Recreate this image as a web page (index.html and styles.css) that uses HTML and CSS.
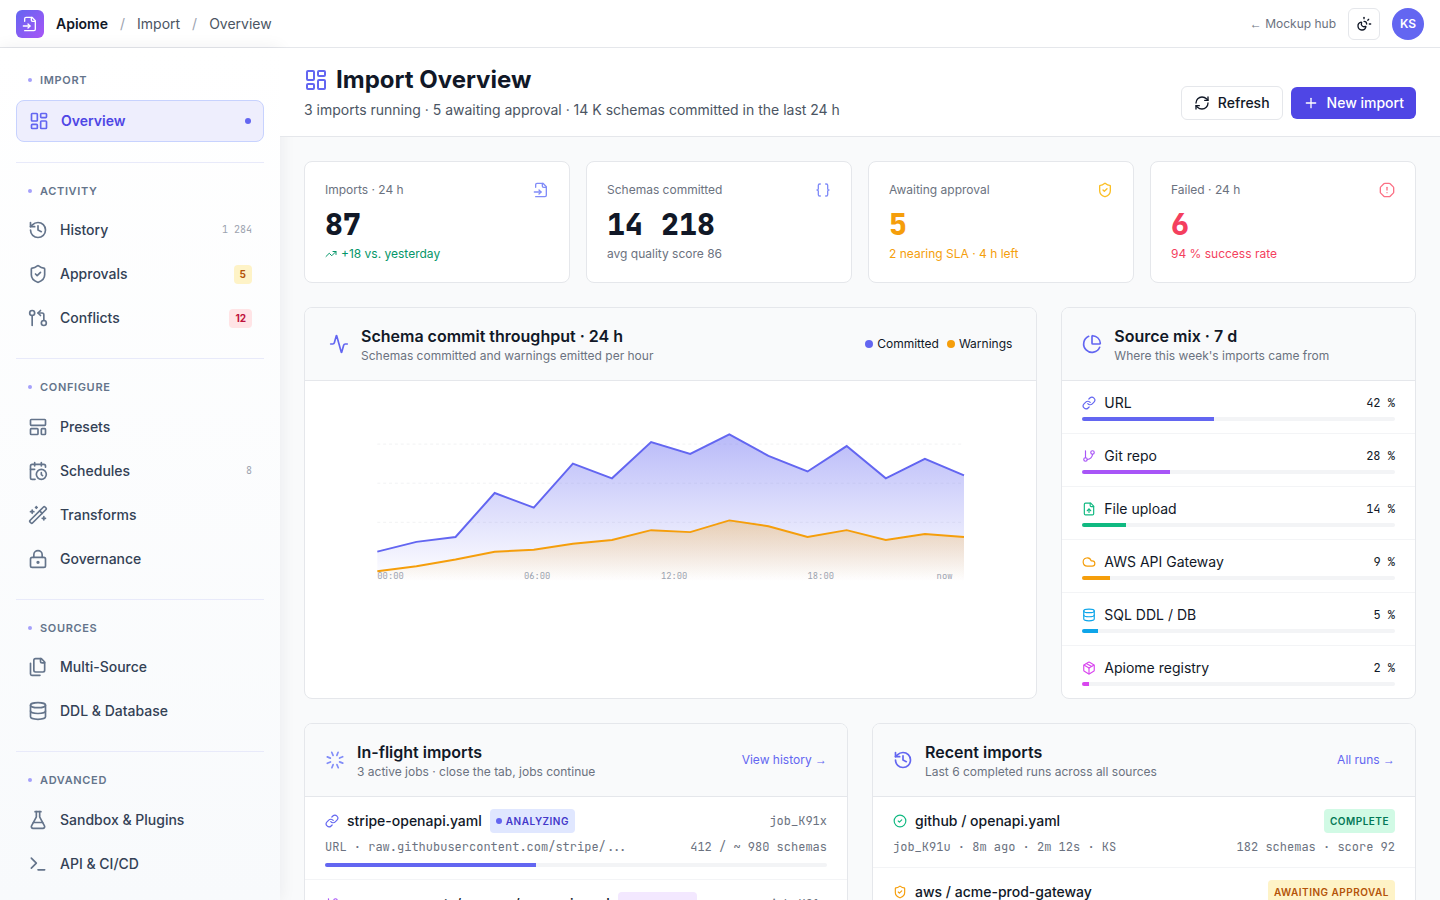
FILE: index.html
```html
<!DOCTYPE html>
<html lang="en">
<head>
    <meta charset="UTF-8">
    <meta name="viewport" content="width=device-width, initial-scale=1.0">
    <title>Import Overview - Apiome</title>
    <link rel="stylesheet" href="styles.css">
</head>
<body>

<!-- Icon sprite -->
<svg class="sprite" aria-hidden="true">
    <symbol id="i-file-input" viewBox="0 0 24 24"><path d="M4 22h14a2 2 0 0 0 2-2V7l-5-5H6a2 2 0 0 0-2 2v4"/><path d="M14 2v4a2 2 0 0 0 2 2h4"/><path d="M2 15h10"/><path d="m9 18 3-3-3-3"/></symbol>
    <symbol id="i-dashboard" viewBox="0 0 24 24"><rect x="3" y="3" width="7" height="9" rx="1"/><rect x="14" y="3" width="7" height="5" rx="1"/><rect x="14" y="12" width="7" height="9" rx="1"/><rect x="3" y="16" width="7" height="5" rx="1"/></symbol>
    <symbol id="i-history" viewBox="0 0 24 24"><path d="M3 12a9 9 0 1 0 9-9 9.75 9.75 0 0 0-6.74 2.74L3 8"/><path d="M3 3v5h5"/><path d="M12 7v5l4 2"/></symbol>
    <symbol id="i-shield" viewBox="0 0 24 24"><path d="M20 13c0 5-3.5 7.5-7.66 8.95a1 1 0 0 1-.67-.01C7.5 20.5 4 18 4 13V6a1 1 0 0 1 1-1c2 0 4.5-1.2 6.24-2.72a1.17 1.17 0 0 1 1.52 0C14.51 3.81 17 5 19 5a1 1 0 0 1 1 1z"/><path d="m9 12 2 2 4-4"/></symbol>
    <symbol id="i-pull" viewBox="0 0 24 24"><circle cx="5" cy="6" r="3"/><path d="M5 9v12"/><circle cx="19" cy="18" r="3"/><path d="m15 9-3-3 3-3"/><path d="M12 6h5a2 2 0 0 1 2 2v7"/></symbol>
    <symbol id="i-template" viewBox="0 0 24 24"><rect x="3" y="3" width="18" height="7" rx="1"/><rect x="3" y="14" width="9" height="7" rx="1"/><rect x="16" y="14" width="5" height="7" rx="1"/></symbol>
    <symbol id="i-calendar" viewBox="0 0 24 24"><path d="M21 7.5V6a2 2 0 0 0-2-2H5a2 2 0 0 0-2 2v14a2 2 0 0 0 2 2h3.5"/><path d="M16 2v4"/><path d="M8 2v4"/><path d="M3 10h5"/><path d="M17.5 17.5 16 16.3V14"/><circle cx="16" cy="16" r="6"/></symbol>
    <symbol id="i-wand" viewBox="0 0 24 24"><path d="m21.64 3.64-1.28-1.28a1.21 1.21 0 0 0-1.72 0L2.36 18.64a1.21 1.21 0 0 0 0 1.72l1.28 1.28a1.2 1.2 0 0 0 1.72 0L21.64 5.36a1.2 1.2 0 0 0 0-1.72"/><path d="m14 7 3 3"/><path d="M5 6v4"/><path d="M19 14v4"/><path d="M10 2v2"/><path d="M7 8H3"/><path d="M21 16h-4"/><path d="M11 3H9"/></symbol>
    <symbol id="i-lock" viewBox="0 0 24 24"><circle cx="12" cy="16" r="1"/><rect x="3" y="10" width="18" height="12" rx="2"/><path d="M7 10V7a5 5 0 0 1 10 0v3"/></symbol>
    <symbol id="i-files" viewBox="0 0 24 24"><path d="M20 7h-3a2 2 0 0 1-2-2V2"/><path d="M9 18a2 2 0 0 1-2-2V4a2 2 0 0 1 2-2h7l4 4v10a2 2 0 0 1-2 2Z"/><path d="M3 7.6v12.8A1.6 1.6 0 0 0 4.6 22h9.8"/></symbol>
    <symbol id="i-database" viewBox="0 0 24 24"><ellipse cx="12" cy="5" rx="9" ry="3"/><path d="M3 5v14a9 3 0 0 0 18 0V5"/><path d="M3 12a9 3 0 0 0 18 0"/></symbol>
    <symbol id="i-flask" viewBox="0 0 24 24"><path d="M14 2v6a2 2 0 0 0 .245.96l5.51 10.08A2 2 0 0 1 18 22H6a2 2 0 0 1-1.755-2.96l5.51-10.08A2 2 0 0 0 10 8V2"/><path d="M6.453 15h11.094"/><path d="M8.5 2h7"/></symbol>
    <symbol id="i-terminal" viewBox="0 0 24 24"><path d="m4 17 6-6-6-6"/><path d="M12 19h8"/></symbol>
    <symbol id="i-sun-moon" viewBox="0 0 24 24"><path d="M12 2v2"/><path d="M14.837 16.385a6 6 0 1 1-7.223-7.222c.624-.147.97.66.715 1.248a4 4 0 0 0 5.26 5.259c.589-.255 1.396.09 1.248.715"/><path d="M16 12a4 4 0 0 0-4-4"/><path d="m19 5-1.256 1.256"/><path d="M20 12h2"/></symbol>
    <symbol id="i-refresh" viewBox="0 0 24 24"><path d="M3 12a9 9 0 0 1 9-9 9.75 9.75 0 0 1 6.74 2.74L21 8"/><path d="M21 3v5h-5"/><path d="M21 12a9 9 0 0 1-9 9 9.75 9.75 0 0 1-6.74-2.74L3 16"/><path d="M8 16H3v5"/></symbol>
    <symbol id="i-plus" viewBox="0 0 24 24"><path d="M5 12h14"/><path d="M12 5v14"/></symbol>
    <symbol id="i-braces" viewBox="0 0 24 24"><path d="M8 3H7a2 2 0 0 0-2 2v5a2 2 0 0 1-2 2 2 2 0 0 1 2 2v5c0 1.1.9 2 2 2h1"/><path d="M16 21h1a2 2 0 0 0 2-2v-5c0-1.1.9-2 2-2a2 2 0 0 1-2-2V5a2 2 0 0 0-2-2h-1"/></symbol>
    <symbol id="i-alert" viewBox="0 0 24 24"><path d="M12 16h.01"/><path d="M12 8v4"/><path d="M15.312 2a2 2 0 0 1 1.414.586l4.688 4.688A2 2 0 0 1 22 8.688v6.624a2 2 0 0 1-.586 1.414l-4.688 4.688a2 2 0 0 1-1.414.586H8.688a2 2 0 0 1-1.414-.586l-4.688-4.688A2 2 0 0 1 2 15.312V8.688a2 2 0 0 1 .586-1.414l4.688-4.688A2 2 0 0 1 8.688 2z"/></symbol>
    <symbol id="i-trend" viewBox="0 0 24 24"><path d="M16 7h6v6"/><path d="m22 7-8.5 8.5-5-5L2 17"/></symbol>
    <symbol id="i-activity" viewBox="0 0 24 24"><path d="M22 12h-2.48a2 2 0 0 0-1.93 1.46l-2.35 8.36a.25.25 0 0 1-.48 0L9.24 2.18a.25.25 0 0 0-.48 0l-2.35 8.36A2 2 0 0 1 4.49 12H2"/></symbol>
    <symbol id="i-pie" viewBox="0 0 24 24"><path d="M21 12c.552 0 1.005-.449.95-.998a10 10 0 0 0-8.953-8.951c-.55-.055-.998.398-.998.95v8a1 1 0 0 0 1 1z"/><path d="M21.21 15.89A10 10 0 1 1 8 2.83"/></symbol>
    <symbol id="i-link" viewBox="0 0 24 24"><path d="M10 13a5 5 0 0 0 7.54.54l3-3a5 5 0 0 0-7.07-7.07l-1.72 1.71"/><path d="M14 11a5 5 0 0 0-7.54-.54l-3 3a5 5 0 0 0 7.07 7.07l1.71-1.71"/></symbol>
    <symbol id="i-branch" viewBox="0 0 24 24"><path d="M6 3v12"/><circle cx="18" cy="6" r="3"/><circle cx="6" cy="18" r="3"/><path d="M18 9a9 9 0 0 1-9 9"/></symbol>
    <symbol id="i-file-up" viewBox="0 0 24 24"><path d="M15 2H6a2 2 0 0 0-2 2v16a2 2 0 0 0 2 2h12a2 2 0 0 0 2-2V7Z"/><path d="M14 2v4a2 2 0 0 0 2 2h4"/><path d="M12 12v6"/><path d="m15 15-3-3-3 3"/></symbol>
    <symbol id="i-cloud" viewBox="0 0 24 24"><path d="M17.5 19H9a7 7 0 1 1 6.71-9h1.79a4.5 4.5 0 1 1 0 9Z"/></symbol>
    <symbol id="i-package" viewBox="0 0 24 24"><path d="M11 21.73a2 2 0 0 0 2 0l7-4A2 2 0 0 0 21 16V8a2 2 0 0 0-1-1.73l-7-4a2 2 0 0 0-2 0l-7 4A2 2 0 0 0 3 8v8a2 2 0 0 0 1 1.73z"/><path d="M12 22V12"/><path d="M3.29 7 12 12l8.71-5"/><path d="m7.5 4.27 9 5.15"/></symbol>
    <symbol id="i-loader" viewBox="0 0 24 24"><g transform="rotate(22 12 12)"><path d="M12 2v4"/><path d="m16.2 7.8 2.9-2.9"/><path d="M18 12h4"/><path d="m16.2 16.2 2.9 2.9"/><path d="M12 18v4"/><path d="m4.9 19.1 2.9-2.9"/><path d="M2 12h4"/><path d="m4.9 4.9 2.9 2.9"/></g></symbol>
    <symbol id="i-check" viewBox="0 0 24 24"><circle cx="12" cy="12" r="10"/><path d="m9 12 2 2 4-4"/></symbol>
</svg>

<header class="topbar">
    <span class="logo"><svg class="icon icon-16"><use href="#i-file-input"/></svg></span>
    <nav class="breadcrumb">
        <a href="#" class="brand">Apiome</a>
        <span class="slash">/</span>
        <a href="#">Import</a>
        <span class="slash">/</span>
        <a href="#">Overview</a>
    </nav>
    <a href="#" class="hub-link"><span class="arrow">←</span> Mockup hub</a>
    <button type="button" class="theme-btn" aria-label="Toggle theme"><svg class="icon icon-16"><use href="#i-sun-moon"/></svg></button>
    <span class="avatar">KS</span>
</header>

<div class="layout">
    <nav class="sidebar">
        <section class="nav-section">
            <h2 class="nav-title">Import</h2>
            <a href="#" class="nav-item active"><svg class="icon icon-20"><use href="#i-dashboard"/></svg>Overview<span class="active-dot"></span></a>
        </section>
        <section class="nav-section">
            <h2 class="nav-title">Activity</h2>
            <a href="#" class="nav-item"><svg class="icon icon-20"><use href="#i-history"/></svg>History<span class="count">1 284</span></a>
            <a href="#" class="nav-item"><svg class="icon icon-20"><use href="#i-shield"/></svg>Approvals<span class="pill pill-amber">5</span></a>
            <a href="#" class="nav-item"><svg class="icon icon-20"><use href="#i-pull"/></svg>Conflicts<span class="pill pill-rose">12</span></a>
        </section>
        <section class="nav-section">
            <h2 class="nav-title">Configure</h2>
            <a href="#" class="nav-item"><svg class="icon icon-20"><use href="#i-template"/></svg>Presets</a>
            <a href="#" class="nav-item"><svg class="icon icon-20"><use href="#i-calendar"/></svg>Schedules<span class="count">8</span></a>
            <a href="#" class="nav-item"><svg class="icon icon-20"><use href="#i-wand"/></svg>Transforms</a>
            <a href="#" class="nav-item"><svg class="icon icon-20"><use href="#i-lock"/></svg>Governance</a>
        </section>
        <section class="nav-section">
            <h2 class="nav-title">Sources</h2>
            <a href="#" class="nav-item"><svg class="icon icon-20"><use href="#i-files"/></svg>Multi-Source</a>
            <a href="#" class="nav-item"><svg class="icon icon-20"><use href="#i-database"/></svg>DDL &amp; Database</a>
        </section>
        <section class="nav-section">
            <h2 class="nav-title">Advanced</h2>
            <a href="#" class="nav-item"><svg class="icon icon-20"><use href="#i-flask"/></svg>Sandbox &amp; Plugins</a>
            <a href="#" class="nav-item"><svg class="icon icon-20"><use href="#i-terminal"/></svg>API &amp; CI/CD</a>
        </section>
    </nav>

    <main class="main">
        <div class="page-header">
            <div>
                <h1><svg class="icon icon-24 indigo"><use href="#i-dashboard"/></svg>Import Overview</h1>
                <p>3 imports running · 5 awaiting approval · 14 K schemas committed in the last 24 h</p>
            </div>
            <div class="actions">
                <button type="button" class="btn btn-outline"><svg class="icon icon-16"><use href="#i-refresh"/></svg>Refresh</button>
                <button type="button" class="btn btn-primary"><svg class="icon icon-16"><use href="#i-plus"/></svg>New import</button>
            </div>
        </div>

        <div class="content">
            <!-- Stat cards -->
            <div class="stats">
                <div class="card stat">
                    <div class="stat-label">Imports · 24 h<svg class="icon icon-16 indigo-light"><use href="#i-file-input"/></svg></div>
                    <div class="stat-value">87</div>
                    <div class="stat-note green-text"><svg class="icon icon-12"><use href="#i-trend"/></svg>+18 vs. yesterday</div>
                </div>
                <div class="card stat">
                    <div class="stat-label">Schemas committed<svg class="icon icon-16 indigo-light"><use href="#i-braces"/></svg></div>
                    <div class="stat-value">14 218</div>
                    <div class="stat-note muted">avg quality score 86</div>
                </div>
                <div class="card stat">
                    <div class="stat-label">Awaiting approval<svg class="icon icon-16 amber-light"><use href="#i-shield"/></svg></div>
                    <div class="stat-value amber">5</div>
                    <div class="stat-note amber">2 nearing SLA · 4 h left</div>
                </div>
                <div class="card stat">
                    <div class="stat-label">Failed · 24 h<svg class="icon icon-16 rose-light"><use href="#i-alert"/></svg></div>
                    <div class="stat-value rose">6</div>
                    <div class="stat-note rose">94 % success rate</div>
                </div>
            </div>

            <div class="overview-grid">
                <section class="card panel wide">
                    <div class="panel-header roomy">
                        <svg class="icon icon-20 indigo"><use href="#i-activity"/></svg>
                        <div class="panel-heading">
                            <h2>Schema commit throughput · 24 h</h2>
                            <p>Schemas committed and warnings emitted per hour</p>
                        </div>
                        <div class="legend">
                            <span class="legend-item"><span class="dot bg-indigo"></span>Committed</span>
                            <span class="legend-item"><span class="dot bg-amber"></span>Warnings</span>
                        </div>
                    </div>
                    <div class="chart-body">
                        <svg class="chart" viewBox="0 0 600 180">
                            <defs>
                                <linearGradient id="g-committed" x1="0" y1="0" x2="0" y2="1">
                                    <stop offset="0" stop-color="#6366f1" stop-opacity="0.45"/>
                                    <stop offset="1" stop-color="#6366f1" stop-opacity="0"/>
                                </linearGradient>
                                <linearGradient id="g-warnings" x1="0" y1="0" x2="0" y2="1">
                                    <stop offset="0" stop-color="#f59e0b" stop-opacity="0.3"/>
                                    <stop offset="1" stop-color="#f59e0b" stop-opacity="0"/>
                                </linearGradient>
                            </defs>
                            <path class="grid-line" d="M0 40H600M0 80H600M0 120H600"/>
                            <path fill="url(#g-committed)" d="M0 150 40 140 80 135 120 90 160 105 200 60 240 75 280 38 320 50 360 30 400 52 440 68 480 42 520 75 560 55 600 72V180H0Z"/>
                            <path class="line line-committed" d="M0 150 40 140 80 135 120 90 160 105 200 60 240 75 280 38 320 50 360 30 400 52 440 68 480 42 520 75 560 55 600 72"/>
                            <path fill="url(#g-warnings)" d="M0 170 40 165 80 158 120 150 160 148 200 142 240 138 280 128 320 130 360 118 400 124 440 135 480 128 520 138 560 132 600 135V180H0Z"/>
                            <path class="line line-warnings" d="M0 170 40 165 80 158 120 150 160 148 200 142 240 138 280 128 320 130 360 118 400 124 440 135 480 128 520 138 560 132 600 135"/>
                            <g class="axis">
                                <text x="0" y="178">00:00</text>
                                <text x="150" y="178">06:00</text>
                                <text x="290" y="178">12:00</text>
                                <text x="440" y="178">18:00</text>
                                <text x="572" y="178">now</text>
                            </g>
                        </svg>
                    </div>
                </section>

                <section class="card panel">
                    <div class="panel-header">
                        <svg class="icon icon-20 indigo"><use href="#i-pie"/></svg>
                        <div class="panel-heading">
                            <h2>Source mix · 7 d</h2>
                            <p>Where this week's imports came from</p>
                        </div>
                    </div>
                    <ul class="rows">
                        <li>
                            <div class="source"><svg class="icon icon-14 indigo"><use href="#i-link"/></svg>URL<span class="percent">42 %</span></div>
                            <div class="bar"><div class="bar-fill bg-indigo" style="width: 42%"></div></div>
                        </li>
                        <li>
                            <div class="source"><svg class="icon icon-14 purple"><use href="#i-branch"/></svg>Git repo<span class="percent">28 %</span></div>
                            <div class="bar"><div class="bar-fill bg-purple" style="width: 28%"></div></div>
                        </li>
                        <li>
                            <div class="source"><svg class="icon icon-14 green"><use href="#i-file-up"/></svg>File upload<span class="percent">14 %</span></div>
                            <div class="bar"><div class="bar-fill bg-green" style="width: 14%"></div></div>
                        </li>
                        <li>
                            <div class="source"><svg class="icon icon-14 amber"><use href="#i-cloud"/></svg>AWS API Gateway<span class="percent">9 %</span></div>
                            <div class="bar"><div class="bar-fill bg-amber" style="width: 9%"></div></div>
                        </li>
                        <li>
                            <div class="source"><svg class="icon icon-14 sky"><use href="#i-database"/></svg>SQL DDL / DB<span class="percent">5 %</span></div>
                            <div class="bar"><div class="bar-fill bg-sky" style="width: 5%"></div></div>
                        </li>
                        <li>
                            <div class="source"><svg class="icon icon-14 fuchsia"><use href="#i-package"/></svg>Apiome registry<span class="percent">2 %</span></div>
                            <div class="bar"><div class="bar-fill bg-fuchsia" style="width: 2%"></div></div>
                        </li>
                    </ul>
                </section>
            </div>

            <div class="jobs-grid">
                <section class="card panel">
                    <div class="panel-header">
                        <svg class="icon icon-20 indigo-light"><use href="#i-loader"/></svg>
                        <div class="panel-heading">
                            <h2>In-flight imports</h2>
                            <p>3 active jobs · close the tab, jobs continue</p>
                        </div>
                        <a href="#" class="more">View history <span class="arrow">→</span></a>
                    </div>
                    <ul class="rows">
                        <li>
                            <div class="job">
                                <svg class="icon icon-14 indigo"><use href="#i-link"/></svg>
                                <span class="job-name">stripe-openapi.yaml</span>
                                <span class="badge badge-indigo"><span class="badge-dot bg-indigo"></span>Analyzing</span>
                                <span class="job-id">job_K91x</span>
                            </div>
                            <div class="job-meta"><span>URL · raw.githubusercontent.com/stripe/...</span><span>412 / ~ 980 schemas</span></div>
                            <div class="bar job-bar"><div class="bar-fill bg-indigo" style="width: 42%"></div></div>
                        </li>
                        <li>
                            <div class="job">
                                <svg class="icon icon-14 purple"><use href="#i-branch"/></svg>
                                <span class="job-name">acme-payments/sources/openapi.yaml</span>
                                <span class="badge badge-purple"><span class="badge-dot bg-purple"></span>Inferring</span>
                                <span class="job-id">job_K91w</span>
                            </div>
                        </li>
                    </ul>
                </section>

                <section class="card panel">
                    <div class="panel-header">
                        <svg class="icon icon-20 indigo"><use href="#i-history"/></svg>
                        <div class="panel-heading">
                            <h2>Recent imports</h2>
                            <p>Last 6 completed runs across all sources</p>
                        </div>
                        <a href="#" class="more">All runs <span class="arrow">→</span></a>
                    </div>
                    <ul class="rows">
                        <li>
                            <div class="job">
                                <svg class="icon icon-14 green"><use href="#i-check"/></svg>
                                <span class="job-name">github / openapi.yaml</span>
                                <span class="badge badge-green push">Complete</span>
                            </div>
                            <div class="job-meta"><span>job_K91u · 8m ago · 2m 12s · KS</span><span>182 schemas · score 92</span></div>
                        </li>
                        <li>
                            <div class="job">
                                <svg class="icon icon-14 amber"><use href="#i-shield"/></svg>
                                <span class="job-name">aws / acme-prod-gateway</span>
                                <span class="badge badge-amber push">Awaiting approval</span>
                            </div>
                        </li>
                    </ul>
                </section>
            </div>
        </div>
    </main>
</div>

</body>
</html>
```
FILE: styles.css
```css
* {
    margin: 0;
    padding: 0;
    box-sizing: border-box;
}
body {
    height: 100vh;
    display: flex;
    flex-direction: column;
    overflow: hidden;
    font-family: Inter, "Liberation Sans", sans-serif;
    font-size: 14px;
    line-height: 20px;
    color: #111827;
    background: #f9fafb;
}
a {
    color: inherit;
    text-decoration: none;
}
button {
    font: inherit;
    color: inherit;
    cursor: pointer;
}
ul {
    list-style: none;
}

/* Icons */
.sprite {
    display: none;
}
.icon {
    flex-shrink: 0;
    fill: none;
    stroke: currentColor;
    stroke-width: 2;
    stroke-linecap: round;
    stroke-linejoin: round;
}
.icon-12 { width: 12px; height: 12px; }
.icon-14 { width: 14px; height: 14px; }
.icon-16 { width: 16px; height: 16px; }
.icon-20 { width: 20px; height: 20px; }
.icon-24 { width: 24px; height: 24px; }
.arrow {
    font-family: "Liberation Sans", sans-serif;
}

/* Colours */
.muted { color: #6b7280; }
.indigo { color: #6366f1; }
.indigo-light { color: #818cf8; }
.purple { color: #a855f7; }
.green { color: #10b981; }
.green-text { color: #059669; }
.amber { color: #f59e0b; }
.amber-light { color: #fbbf24; }
.rose { color: #f43f5e; }
.rose-light { color: #fb7185; }
.sky { color: #0ea5e9; }
.fuchsia { color: #d946ef; }
.bg-indigo { background: #6366f1; }
.bg-purple { background: #a855f7; }
.bg-green { background: #10b981; }
.bg-amber { background: #f59e0b; }
.bg-sky { background: #0ea5e9; }
.bg-fuchsia { background: #d946ef; }

/* Top bar */
.topbar {
    height: 48px;
    flex-shrink: 0;
    display: flex;
    align-items: center;
    gap: 12px;
    padding: 0 16px;
    background: #fff;
    border-bottom: 1px solid #e5e7eb;
}
.logo {
    width: 28px;
    height: 28px;
    display: flex;
    align-items: center;
    justify-content: center;
    border-radius: 6px;
    color: #fff;
    background: linear-gradient(135deg, #6366f1, #a855f7);
}
.breadcrumb {
    display: flex;
    gap: 12px;
    margin-right: auto;
    color: #4b5563;
}
.brand {
    font-weight: 600;
    color: #111827;
}
.slash {
    color: #9ca3af;
}
.hub-link {
    font-size: 12px;
    color: #6b7280;
}
.theme-btn {
    width: 32px;
    height: 32px;
    display: flex;
    align-items: center;
    justify-content: center;
    background: #fff;
    border: 1px solid #e5e7eb;
    border-radius: 6px;
}
.avatar {
    width: 32px;
    height: 32px;
    display: flex;
    align-items: center;
    justify-content: center;
    border-radius: 50%;
    font-size: 12px;
    font-weight: 600;
    color: #fff;
    background: #6366f1;
}

.layout {
    flex: 1;
    min-height: 0;
    display: flex;
}

/* Sidebar */
.sidebar {
    position: relative;
    z-index: 1;
    width: 280px;
    flex-shrink: 0;
    padding: 4px 16px 0;
    background: linear-gradient(#fff, #f8fafc);
    box-shadow: 0 0 16px rgba(15, 23, 42, 0.07);
}
.nav-section {
    display: flex;
    flex-direction: column;
    gap: 4px;
    padding: 20px 0;
}
.nav-section + .nav-section {
    border-top: 1px solid #e8eafa;
}
.nav-title {
    display: flex;
    align-items: center;
    gap: 8px;
    padding: 0 12px;
    margin-bottom: 7px;
    font-size: 11px;
    line-height: 1.5;
    font-weight: 600;
    letter-spacing: 0.06em;
    text-transform: uppercase;
    color: #64748b;
}
.nav-title::before {
    content: "";
    width: 4px;
    height: 4px;
    border-radius: 50%;
    background: #a5a0fb;
}
.nav-item {
    display: flex;
    align-items: center;
    gap: 12px;
    padding: 10px 12px;
    border-radius: 8px;
    font-weight: 500;
    color: #334155;
}
.nav-item .icon {
    color: #64748b;
}
.nav-item.active {
    border: 1px solid #c7d2fe;
    font-weight: 600;
    color: #4f46e5;
    background: #eeeefd;
}
.nav-item.active .icon {
    color: #6366f1;
}
.active-dot {
    width: 6px;
    height: 6px;
    margin-left: auto;
    border-radius: 50%;
    background: #6366f1;
}
.count {
    margin-left: auto;
    font-family: "JetBrains Mono", "Liberation Mono", monospace;
    font-size: 10px;
    font-weight: 400;
    color: #9ca3af;
}
.pill {
    margin-left: auto;
    padding: 2px 6px;
    border-radius: 4px;
    font-size: 10px;
    line-height: 15px;
    font-weight: 700;
}
.pill-amber {
    color: #b45309;
    background: #fef3c7;
}
.pill-rose {
    color: #be123c;
    background: #ffe4e6;
}

/* Main area */
.main {
    flex: 1;
    min-width: 0;
    overflow-y: auto;
    scrollbar-width: none;
}
.page-header {
    position: relative;
    z-index: 2;
    display: flex;
    justify-content: space-between;
    align-items: flex-end;
    padding: 16px 24px;
    background: #fff;
    border-bottom: 1px solid #e5e7eb;
}
.page-header h1 {
    display: flex;
    align-items: center;
    gap: 8px;
    font-size: 24px;
    line-height: 32px;
    font-weight: 700;
}
.page-header p {
    margin-top: 4px;
    color: #4b5563;
}
.actions {
    display: flex;
    align-items: center;
    gap: 8px;
}
.btn {
    display: flex;
    align-items: center;
    gap: 8px;
    padding: 6px 12px;
    border: 0;
    border-radius: 6px;
    font-weight: 500;
}
.btn-outline {
    background: #fff;
    border: 1px solid #e5e7eb;
}
.btn-primary {
    color: #fff;
    background: #4f46e5;
}
.content {
    display: flex;
    flex-direction: column;
    gap: 24px;
    padding: 24px;
}
.card {
    background: #fff;
    border: 1px solid #e5e7eb;
    border-radius: 8px;
}

/* Stat cards */
.stats {
    display: grid;
    grid-template-columns: repeat(4, 1fr);
    gap: 16px;
}
.stat {
    padding: 20px;
    font-size: 12px;
    line-height: 16px;
}
.stat-label {
    display: flex;
    justify-content: space-between;
    color: #6b7280;
}
.stat-value {
    margin: 8px 0 4px;
    font-family: "JetBrains Mono", "Liberation Mono", monospace;
    font-size: 30px;
    line-height: 36px;
    font-weight: 800;
}
.stat-note {
    display: flex;
    align-items: center;
    gap: 4px;
}

/* Panels */
.overview-grid {
    display: grid;
    grid-template-columns: repeat(3, 1fr);
    gap: 24px;
}
.wide {
    grid-column: span 2;
}
.jobs-grid {
    display: grid;
    grid-template-columns: repeat(2, 1fr);
    gap: 24px;
}
.panel {
    overflow: hidden;
}
.panel-header {
    display: flex;
    align-items: center;
    gap: 12px;
    padding: 16px 20px;
    background: #f9fafb;
    border-bottom: 1px solid #e5e7eb;
}
.panel-header.roomy {
    padding: 16px 24px;
}
.panel-heading {
    flex: 1;
}
.panel-heading h2 {
    font-size: 16px;
    line-height: 24px;
    font-weight: 600;
}
.panel-heading p {
    font-size: 12px;
    line-height: 16px;
    color: #6b7280;
}
.more {
    font-size: 12px;
    color: #6366f1;
}
.legend {
    display: flex;
    gap: 8px;
    font-size: 12px;
}
.legend-item {
    display: flex;
    align-items: center;
    gap: 4px;
}
.dot {
    width: 8px;
    height: 8px;
    border-radius: 50%;
}

/* Chart */
.chart-body {
    padding: 24px;
}
.chart {
    display: block;
    width: 100%;
    height: 176px;
}
.grid-line {
    fill: none;
    stroke: #9ca3af;
    stroke-opacity: 0.15;
    stroke-dasharray: 3 3;
}
.line {
    fill: none;
    stroke-width: 2;
}
.line-committed {
    stroke: #6366f1;
}
.line-warnings {
    stroke: #f59e0b;
}
.axis {
    font-family: "JetBrains Mono", "Liberation Mono", monospace;
    font-size: 9px;
    fill: #9ca3af;
}

/* List rows */
.rows li {
    padding: 12px 20px;
}
.rows li + li {
    border-top: 1px solid #f3f4f6;
}
.source {
    display: flex;
    align-items: center;
    gap: 8px;
    margin-bottom: 4px;
}
.percent {
    margin-left: auto;
    font-family: "JetBrains Mono", "Liberation Mono", monospace;
    font-size: 12px;
}
.bar {
    height: 4px;
    border-radius: 2px;
    background: #f3f4f6;
    overflow: hidden;
}
.bar-fill {
    height: 100%;
}
.job {
    display: flex;
    align-items: center;
    gap: 8px;
}
.job-name {
    font-weight: 500;
}
.job-id {
    margin-left: auto;
    font-family: "JetBrains Mono", "Liberation Mono", monospace;
    font-size: 12px;
    color: #6b7280;
}
.job-meta {
    display: flex;
    justify-content: space-between;
    margin-top: 6px;
    font-family: "JetBrains Mono", "Liberation Mono", monospace;
    font-size: 12px;
    line-height: 16px;
    color: #6b7280;
}
.job-bar {
    margin-top: 8px;
}
.badge {
    display: flex;
    align-items: center;
    gap: 4px;
    padding: 4px 6px;
    border-radius: 4px;
    font-size: 10px;
    line-height: 16px;
    font-weight: 600;
    letter-spacing: 0.05em;
    text-transform: uppercase;
}
.badge-dot {
    width: 6px;
    height: 6px;
    border-radius: 50%;
}
.badge-indigo {
    color: #4338ca;
    background: #e0e7ff;
}
.badge-purple {
    color: #7e22ce;
    background: #f3e8ff;
}
.badge-green {
    color: #047857;
    background: #d1fae5;
}
.badge-amber {
    color: #b45309;
    background: #fef3c7;
}
.push {
    margin-left: auto;
}
```
